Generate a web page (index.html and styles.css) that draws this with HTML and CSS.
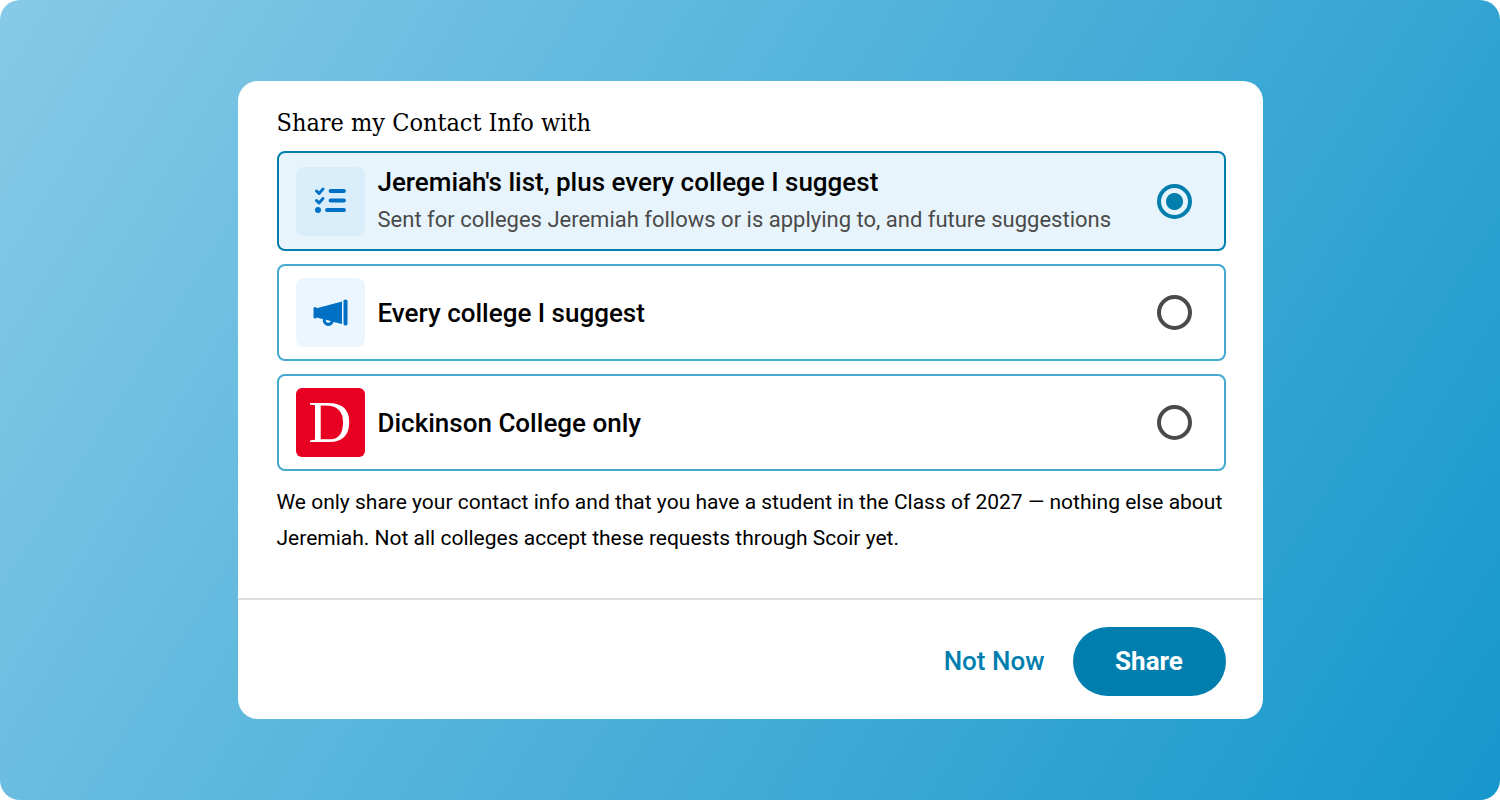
FILE: index.html
```
<!DOCTYPE html>
<html lang="en">
<head>
    <meta charset="UTF-8">
    <meta name="viewport" content="width=device-width, initial-scale=1.0">
    <title>Share my Contact Info</title>
    <link rel="stylesheet" href="styles.css">
</head>
<body>
    <main class="backdrop">
        <form class="dialog">
            <fieldset class="dialog-body">
                <legend class="title">Share my Contact Info with</legend>

                <div class="options">
                    <label class="option">
                        <span class="option-icon">
                            <svg width="35" height="29" viewBox="0 0 35 29" fill="none" stroke="#0070c5" stroke-linecap="round" stroke-linejoin="round" aria-hidden="true">
                                <path d="M3.500 4l2.500 2.500 4-4.500M3.500 13.500l2.500 2.500 4-4.500" stroke-width="2.900"/>
                                <path d="M17.500 4h13.500M17.500 13.500h13.500M14 23h17" stroke-width="3.800"/>
                                <circle cx="5" cy="23" r="3" fill="#0070c5" stroke="none"/>
                            </svg>
                        </span>
                        <span class="option-text">
                            <span class="option-name">Jeremiah's list, plus every college I suggest</span>
                            <span class="option-note">Sent for colleges Jeremiah follows or is applying to, and future suggestions</span>
                        </span>
                        <input class="option-radio" type="radio" name="share" value="list" checked>
                    </label>

                    <label class="option">
                        <span class="option-icon">
                            <svg width="35" height="29" viewBox="0 0 35 29" fill="#0070c5" aria-hidden="true">
                                <path d="M.5 10.500Q.5 9 2 9t1.700 1.200L29 3.500v22.500L20.500 23.900A5.400 5.400 0 0 1 10 21.200L3.700 19.400Q3.400 20.500 2 20.500T.5 19z"/>
                                <path d="M12.700 21.700l5.200 1.300a2.700 2.700 0 0 1-5.200-1.300z" fill="#ecf6ff"/>
                                <rect x="30.500" y="1.500" width="4" height="26" rx="1.800"/>
                            </svg>
                        </span>
                        <span class="option-text">
                            <span class="option-name">Every college I suggest</span>
                        </span>
                        <input class="option-radio" type="radio" name="share" value="suggested">
                    </label>

                    <label class="option">
                        <span class="option-icon college-logo" aria-hidden="true">D</span>
                        <span class="option-text">
                            <span class="option-name">Dickinson College only</span>
                        </span>
                        <input class="option-radio" type="radio" name="share" value="dickinson">
                    </label>
                </div>

                <p class="disclaimer">We only share your contact info and that you have a student in the Class of 2027 — nothing else about Jeremiah. Not all colleges accept these requests through Scoir yet.</p>
            </fieldset>

            <div class="dialog-footer">
                <button class="btn btn-text" type="button">Not Now</button>
                <button class="btn btn-primary" type="button">Share</button>
            </div>
        </form>
    </main>
</body>
</html>
```
FILE: styles.css
```
* {
    box-sizing: border-box;
}

body {
    margin: 0;
    background: #fff;
    font-family: Roboto, sans-serif;
    color: #000;
}

.backdrop {
    display: flex;
    justify-content: center;
    align-items: center;
    min-height: 100vh;
    padding: 24px;
    border-radius: 20px;
    background: linear-gradient(122deg, #86cae7, #1697cc);
}

.dialog {
    width: 100%;
    max-width: 1025px;
    border-radius: 20px;
    background: #fff;
}

.dialog-body {
    min-width: 0;
    margin: 0;
    padding: 24px 37px 42px 39px;
    border: 0;
}

.title {
    float: left;
    width: 100%;
    margin-bottom: 10px;
    padding: 0;
    font-family: "Roboto Slab", "DejaVu Serif Condensed", "DejaVu Serif", serif;
    font-size: 25px;
    line-height: 36px;
}

.options {
    clear: both;
    display: flex;
    flex-direction: column;
    gap: 13px;
}

.option {
    display: flex;
    align-items: center;
    gap: 13px;
    padding: 12px 32px 12px 17px;
    border: 2px solid #44a8cf;
    border-radius: 8px;
    cursor: pointer;
}

.option:has(:checked) {
    padding-top: 13px;
    padding-bottom: 13px;
    border-color: #007faf;
    background: #e8f4fb;
}

.option-icon {
    display: flex;
    flex: none;
    justify-content: center;
    align-items: center;
    width: 69px;
    height: 69px;
    border-radius: 8px;
    background: #ecf6ff;
}

.option:has(:checked) .option-icon {
    background: #d9edfb;
}

.college-logo {
    border-radius: 6px;
    background: #e70022;
    color: #fff;
    font-family: "Liberation Serif", serif;
    font-size: 60px;
    line-height: 69px;
}

.option-text {
    display: flex;
    flex: 1;
    flex-direction: column;
    gap: 6px;
    min-width: 0;
}

.option-name {
    font-size: 26px;
    font-weight: 500;
    line-height: 32px;
}

.option-note {
    color: #4a4a4a;
    font-size: 22px;
    line-height: 32px;
}

.option-radio {
    appearance: none;
    flex: none;
    width: 35px;
    height: 35px;
    margin: 0;
    border: 4px solid #4a4a4a;
    border-radius: 50%;
    cursor: pointer;
}

.option-radio:checked {
    border-color: #007faf;
    background: radial-gradient(circle, #007faf 8px, transparent 9px);
}

.disclaimer {
    margin: 13px 0 0;
    font-size: 21px;
    line-height: 36px;
}

.dialog-footer {
    display: flex;
    justify-content: flex-end;
    align-items: center;
    gap: 28px;
    padding: 27px 37px 23px;
    border-top: 2px solid #dedede;
}

.btn {
    border: 0;
    font-family: inherit;
    font-size: 26px;
    font-weight: 500;
    line-height: 33px;
    cursor: pointer;
}

.btn-text {
    padding: 0;
    background: none;
    color: #007faf;
}

.btn-primary {
    min-width: 153px;
    padding: 18px 40px;
    border-radius: 35px;
    background: #007faf;
    color: #fff;
    font-weight: 700;
}
```
